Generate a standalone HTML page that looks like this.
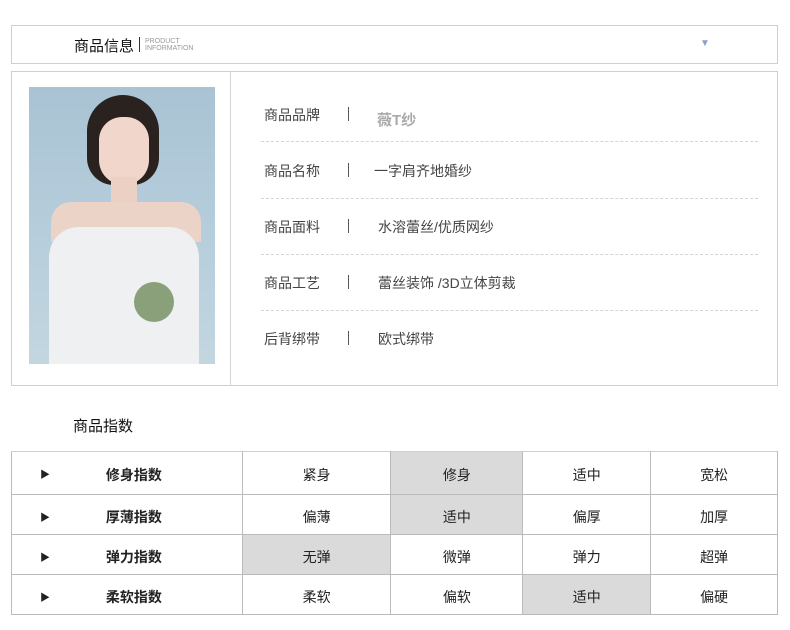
<!DOCTYPE html>
<html><head><meta charset="utf-8"><style>
*{margin:0;padding:0;box-sizing:border-box}
body{width:790px;height:630px;background:#fff;position:relative;overflow:hidden;font-family:"Liberation Sans","Noto Sans CJK SC",sans-serif;color:#333}
.a{position:absolute}
.box{border:1px solid #cfcfcf}
.lbl{font-size:14px;color:#444}
.val{font-size:14px;color:#444}
.dash{border-top:1px dashed #d5d5d5;height:0;width:497px;left:261px}
.bar{width:1px;height:14px;background:#555;left:348px}
table{position:absolute;left:11px;top:451px;border-collapse:collapse;width:767px}
td{border:1px solid #bbb;text-align:center;font-size:14px;color:#222;height:40px;position:relative;padding-top:4px}
td.h{font-weight:bold;padding-left:14px}
td.h i{position:absolute;left:28px;top:14px;font-style:normal;font-size:10px}
td.g{background:#dadada}
tr:first-child td{height:43px;border-top-color:#cfcfcf}
</style></head><body>
<div class="a box" style="left:11px;top:25px;width:767px;height:39px"></div>
<div class="a" style="left:74px;top:35px;font-size:15px;color:#111">商品信息</div>
<div class="a" style="left:139px;top:37px;width:1px;height:15px;background:#333"></div>
<div class="a" style="left:145px;top:38px;font-size:7px;line-height:7px;color:#999">PRODUCT<br>INFORMATION</div>
<div class="a" style="left:700px;top:38px;font-size:10px;color:#8da0c8">▼</div>

<div class="a box" style="left:11px;top:71px;width:767px;height:315px"></div>
<div class="a" style="left:230px;top:72px;width:1px;height:313px;background:#d5d5d5"></div>
<div class="a" style="left:29px;top:87px;width:186px;height:277px;background:linear-gradient(180deg,#a9c3d4,#b8cfdc 60%,#c3d6e0);overflow:hidden">
  <div class="a" style="left:58px;top:8px;width:72px;height:90px;border-radius:40px 40px 30px 30px;background:#2a221f"></div>
  <div class="a" style="left:70px;top:30px;width:50px;height:68px;border-radius:24px 24px 26px 26px;background:#f1d7cb"></div>
  <div class="a" style="left:82px;top:90px;width:26px;height:30px;background:#ecd0c3"></div>
  <div class="a" style="left:22px;top:115px;width:150px;height:40px;border-radius:20px 20px 0 0;background:#ecd3c8"></div>
  <div class="a" style="left:20px;top:140px;width:150px;height:140px;border-radius:30px 30px 0 0;background:#eef0f2"></div>
  <div class="a" style="left:105px;top:195px;width:40px;height:40px;border-radius:50%;background:#8aa07a"></div>
</div>

<div class="a lbl" style="left:264px;top:105px">商品品牌</div>
<div class="a bar" style="top:107px"></div>
<div class="a" style="left:377px;top:109px;font-size:15px;color:#aaa;font-weight:bold">薇T纱</div>
<div class="a dash" style="top:141px"></div>
<div class="a lbl" style="left:264px;top:161px">商品名称</div>
<div class="a bar" style="top:163px"></div>
<div class="a val" style="left:374px;top:161px">一字肩齐地婚纱</div>
<div class="a dash" style="top:198px"></div>
<div class="a lbl" style="left:264px;top:217px">商品面料</div>
<div class="a bar" style="top:219px"></div>
<div class="a val" style="left:378px;top:217px">水溶蕾丝/优质网纱</div>
<div class="a dash" style="top:254px"></div>
<div class="a lbl" style="left:264px;top:273px">商品工艺</div>
<div class="a bar" style="top:275px"></div>
<div class="a val" style="left:378px;top:273px">蕾丝装饰 /3D立体剪裁</div>
<div class="a dash" style="top:310px"></div>
<div class="a lbl" style="left:264px;top:329px">后背绑带</div>
<div class="a bar" style="top:331px"></div>
<div class="a val" style="left:378px;top:329px">欧式绑带</div>

<div class="a" style="left:73px;top:415px;font-size:15px;color:#111">商品指数</div>

<table>
<colgroup><col style="width:231px"><col style="width:149px"><col style="width:132px"><col style="width:128px"><col style="width:127px"></colgroup>
<tr><td class="h"><i>▶</i>修身指数</td><td>紧身</td><td class="g">修身</td><td>适中</td><td>宽松</td></tr>
<tr><td class="h"><i>▶</i>厚薄指数</td><td>偏薄</td><td class="g">适中</td><td>偏厚</td><td>加厚</td></tr>
<tr><td class="h"><i>▶</i>弹力指数</td><td class="g">无弹</td><td>微弹</td><td>弹力</td><td>超弹</td></tr>
<tr><td class="h"><i>▶</i>柔软指数</td><td>柔软</td><td>偏软</td><td class="g">适中</td><td>偏硬</td></tr>
</table>
</body></html>
